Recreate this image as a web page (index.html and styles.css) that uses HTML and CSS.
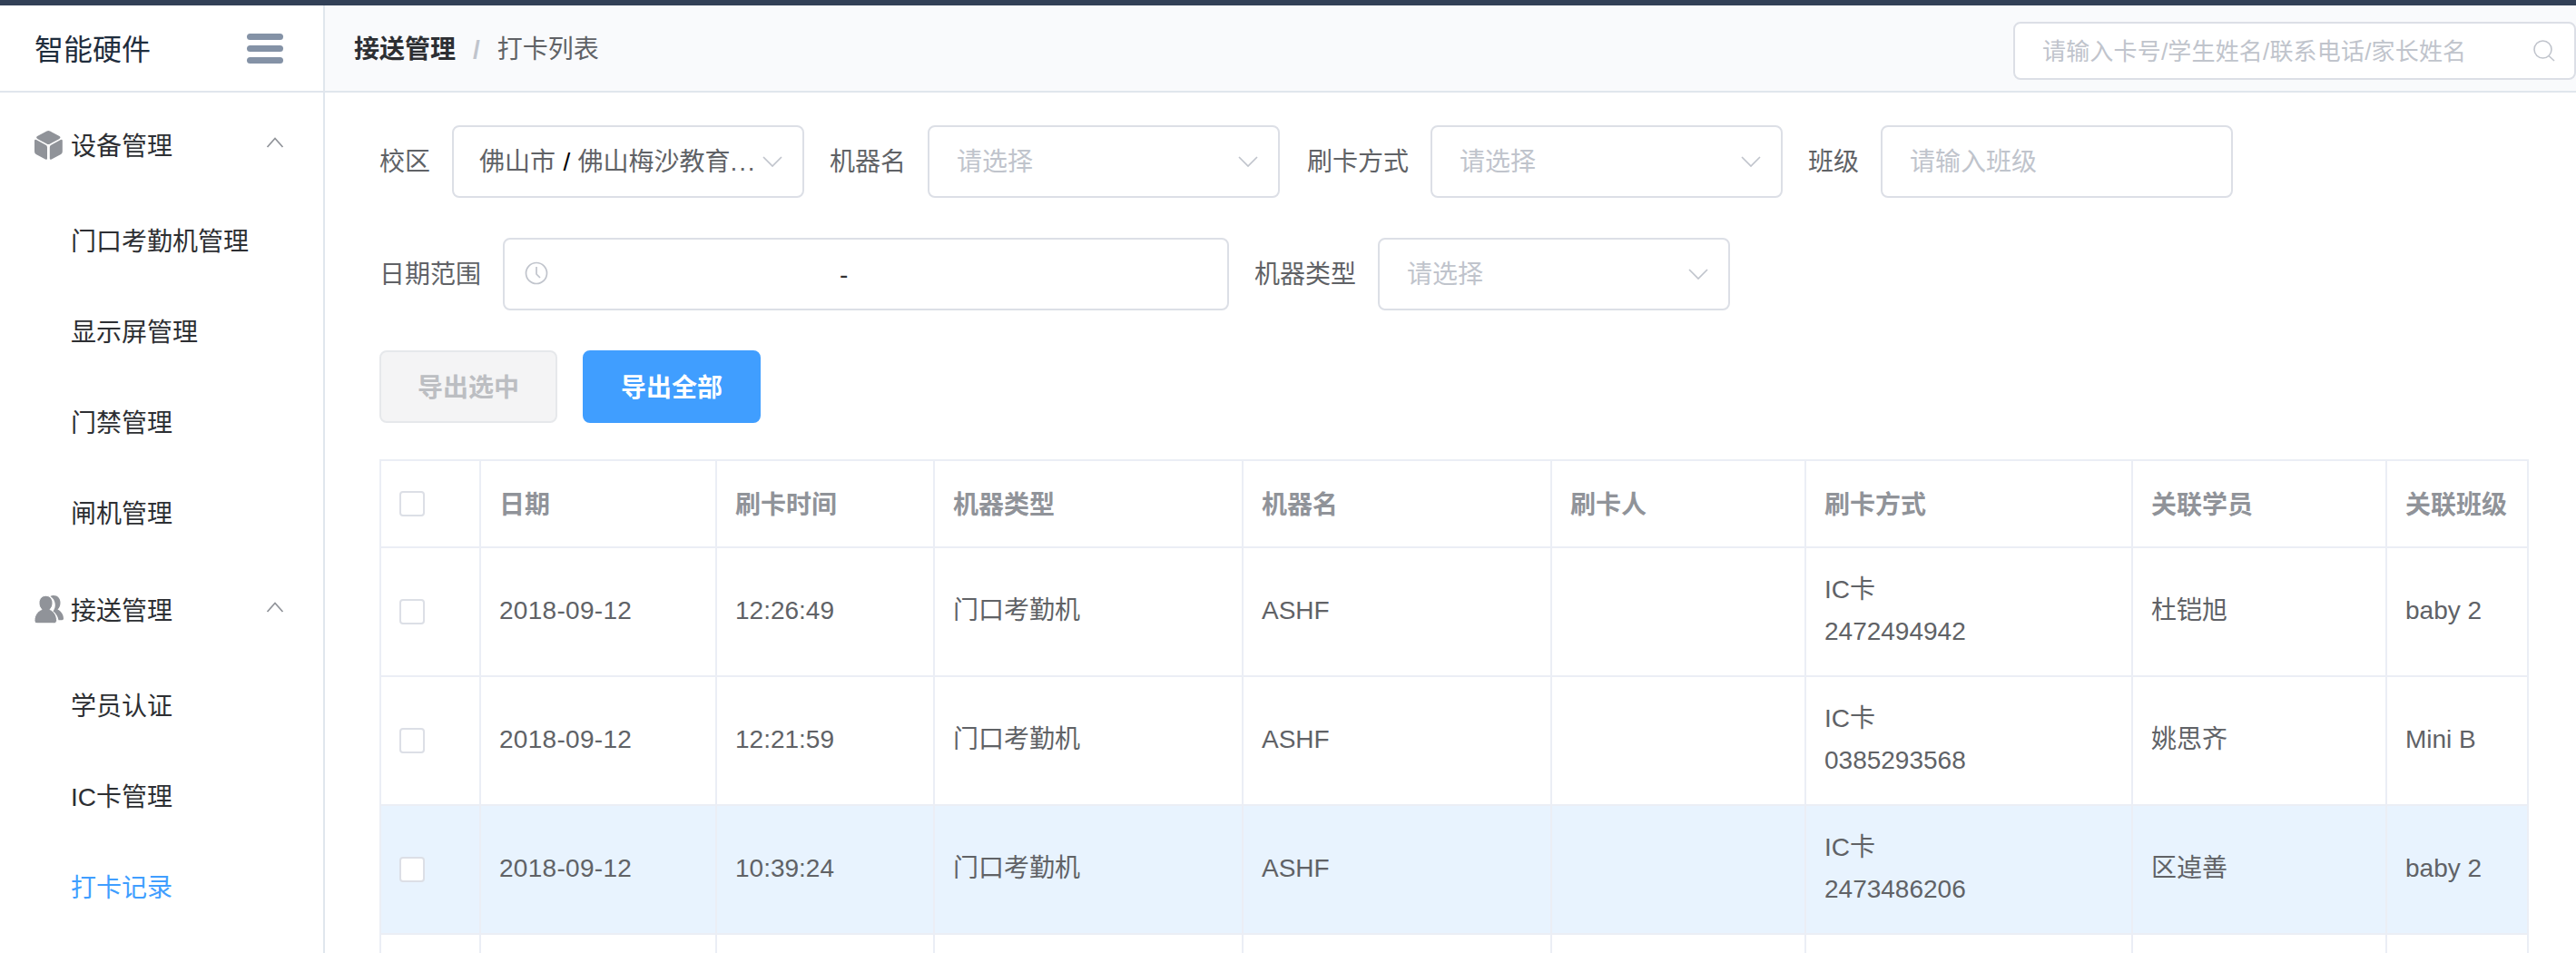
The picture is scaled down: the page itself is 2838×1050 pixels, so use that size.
FILE: index.html
```html
<!DOCTYPE html>
<html lang="zh-CN">
<head>
<meta charset="utf-8">
<title>打卡列表</title>
<link rel="stylesheet" href="styles.css">
</head>
<body>
<svg class="sprite" width="0" height="0">
  <symbol id="down" viewBox="0 0 22 12"><path d="M1 1l10 10L21 1" fill="none" stroke="currentColor" stroke-width="1.7"/></symbol>
  <symbol id="up" viewBox="0 0 20 12"><path d="M1.500 11L10 1.500l8.500 9.500" fill="none" stroke="currentColor" stroke-width="1.7"/></symbol>
</svg>
<div class="topbar"></div>
<div class="app">
  <aside class="sidebar">
    <div class="brand">
      <span class="text">智能硬件</span>
      <div class="burger"><i></i><i></i><i></i></div>
    </div>
    <nav class="menu">
      <div class="group">
        <svg class="group-icon" viewBox="0 0 33 34"><path d="M14.500 1.500q1.800-1 3.600 0L28 6.800q3 1.700 0 3.400l-9.900 5.300q-1.800 1-3.600 0L4.600 10.200q-3-1.700 0-3.400z M1 12.200q0-2 2-1.200l10.500 5.800q1.500.8 1.500 2.500V31.500q0 2-2 1L2.700 27Q1 26 1 24z M31.800 12.200q0-2-2-1.200l-10.500 5.800q-1.500.8-1.500 2.500V31.500q0 2 2 1L30.100 27q1.700-1 1.700-3z"/></svg>
        <span class="text">设备管理</span>
        <svg class="caret"><use href="#up"/></svg>
      </div>
      <a class="item">门口考勤机管理</a>
      <a class="item">显示屏管理</a>
      <a class="item">门禁管理</a>
      <a class="item">闸机管理</a>
      <div class="group">
        <svg class="group-icon people" viewBox="0 0 33 34"><path d="M18.500 2c1-.8 2.200-1 3.500-1 4.500 0 7.500 3.500 7.500 8 0 3-1 5.500-3 7.500 4 2 6.500 6 6.500 10 0 1-.7 1.700-1.700 1.700H27.500c-.8-4-2.800-7.500-6-9.700 3.700-5 3.200-12.500-3-16.500z"/><path d="M13.500 1.300c4.300 0 7.500 3.400 7.500 7.900 0 3-1 5.500-3 7.300 4.500 2 7.500 6.500 7.500 12 0 2-1 3.300-3 3.300H4c-2 0-3-1.300-3-3.300C1 23 4.300 18.500 9 16.500c-2-1.800-3-4.300-3-7.300 0-4.500 3.200-7.900 7.500-7.900z"/></svg>
        <span class="text">接送管理</span>
        <svg class="caret"><use href="#up"/></svg>
      </div>
      <a class="item">学员认证</a>
      <a class="item">IC卡管理</a>
      <a class="item active">打卡记录</a>
    </nav>
  </aside>
  <main class="main">
    <header class="header">
      <div class="crumbs"><b>接送管理</b><span class="sep">/</span><span>打卡列表</span></div>
      <div class="search">
        <span>请输入卡号/学生姓名/联系电话/家长姓名</span>
        <svg viewBox="0 0 24 24"><circle cx="10.500" cy="10.500" r="9.500"/><path d="M17 17.500l6 5.500"/></svg>
      </div>
    </header>
    <section class="content">
      <div class="filters">
        <div class="field"><label>校区</label><div class="box value"><span>佛山市<em>/</em>佛山梅沙教育<span class="dots">...</span></span><svg class="arrow"><use href="#down"/></svg></div></div>
        <div class="field"><label>机器名</label><div class="box"><span>请选择</span><svg class="arrow"><use href="#down"/></svg></div></div>
        <div class="field way"><label>刷卡方式</label><div class="box"><span>请选择</span><svg class="arrow"><use href="#down"/></svg></div></div>
        <div class="field"><label>班级</label><div class="box"><span>请输入班级</span></div></div>
      </div>
      <div class="filters">
        <div class="field"><label>日期范围</label><div class="box range"><svg class="clock" viewBox="0 0 26 26"><circle cx="13" cy="13" r="11.500"/><path d="M13 6v8l4 4"/></svg><span>-</span></div></div>
        <div class="field"><label>机器类型</label><div class="box"><span>请选择</span><svg class="arrow"><use href="#down"/></svg></div></div>
      </div>
      <div class="actions">
        <button class="btn disabled" disabled>导出选中</button>
        <button class="btn primary">导出全部</button>
      </div>
      <table class="table">
        <colgroup><col class="c-check"><col class="c-date"><col class="c-time"><col class="c-type"><col class="c-name"><col class="c-person"><col class="c-way"><col class="c-student"><col class="c-class"></colgroup>
        <thead>
          <tr><th class="sel"><i class="check"></i></th><th>日期</th><th>刷卡时间</th><th>机器类型</th><th>机器名</th><th>刷卡人</th><th>刷卡方式</th><th>关联学员</th><th>关联班级</th></tr>
        </thead>
        <tbody>
          <tr><td class="sel"><i class="check"></i></td><td class="date">2018-09-12</td><td>12:26:49</td><td>门口考勤机</td><td>ASHF</td><td></td><td>IC卡<br>2472494942</td><td>杜铠旭</td><td>baby 2</td></tr>
          <tr><td class="sel"><i class="check"></i></td><td class="date">2018-09-12</td><td>12:21:59</td><td>门口考勤机</td><td>ASHF</td><td></td><td>IC卡<br>0385293568</td><td>姚思齐</td><td>Mini B</td></tr>
          <tr class="hover"><td class="sel"><i class="check"></i></td><td class="date">2018-09-12</td><td>10:39:24</td><td>门口考勤机</td><td>ASHF</td><td></td><td>IC卡<br>2473486206</td><td>区逴善</td><td>baby 2</td></tr>
          <tr class="cut"><td></td><td></td><td></td><td></td><td></td><td></td><td></td><td></td><td></td></tr>
        </tbody>
      </table>
    </section>
  </main>
</div>
</body>
</html>
```
FILE: styles.css
```css
* { box-sizing: border-box; }
body {
  margin: 0;
  height: 1050px;
  overflow: hidden;
  background: #fff;
  color: #606266;
  font: 28px/46px "Liberation Sans", "Noto Sans CJK SC", sans-serif;
}
i, em { font-style: normal; }
.sprite { display: block; }
.topbar { height: 6px; background: #324057; }
.app { display: flex; height: 1044px; }

.sidebar { width: 358px; flex: none; border-right: 2px solid #e0e6ed; color: #2d2f33; }
.brand {
  display: flex;
  align-items: center;
  justify-content: space-between;
  height: 96px;
  padding: 0 44px 0 38px;
  border-bottom: 2px solid #e0e6ed;
  color: #1f2d3d;
  font-size: 32px;
}
.text { padding-top: 3px; }
.burger { display: flex; flex-direction: column; gap: 6px; width: 40px; }
.burger i { height: 7px; border-radius: 4px; background: #8492a6; }
.menu { padding-top: 2px; }
.group { display: flex; align-items: center; height: 112px; padding: 0 43px 0 37px; }
.group-icon { width: 33px; height: 34px; margin-right: 8px; fill: #909399; }
.people path + path { stroke: #fff; stroke-width: 1; }
.caret { width: 20px; height: 12px; margin: -6px 0 0 auto; color: #909399; }
.item { display: block; height: 100px; padding: 2px 0 0 78px; line-height: 98px; }
.item.active { color: #409eff; }

.main { flex: 1; min-width: 0; }
.header {
  display: flex;
  align-items: center;
  justify-content: space-between;
  height: 96px;
  padding-left: 32px;
  border-bottom: 2px solid #e0e6ed;
  background: #f9fafc;
}
.crumbs { padding-top: 3px; }
.crumbs b { color: #2d2f33; }
.crumbs .sep { margin: 0 19px; color: #c0c4cc; font-weight: bold; }
.search {
  display: flex;
  align-items: center;
  justify-content: space-between;
  width: 620px;
  height: 64px;
  margin-top: 6px;
  padding: 0 21px 0 30px;
  border: 2px solid #dcdfe6;
  border-radius: 8px;
  background: #fff;
  color: #c0c4cc;
  font-size: 26px;
}
.search span { padding-top: 2px; letter-spacing: .18px; }
.search svg { width: 24px; height: 24px; fill: none; stroke: #c0c4cc; stroke-width: 1.6; }

.content { padding: 36px 52px 0 60px; }
.filters { display: flex; gap: 28px; margin-bottom: 44px; }
.field { display: flex; align-items: center; gap: 24px; }
.way { margin-left: 2px; }
.field label, .box > span { padding-top: 2px; }
.box {
  display: flex;
  align-items: center;
  justify-content: space-between;
  width: 388px;
  height: 80px;
  padding: 0 22px 0 30px;
  border: 2px solid #dcdfe6;
  border-radius: 8px;
  color: #c0c4cc;
  white-space: nowrap;
}
.box.value { padding-left: 28px; color: #606266; }
.value em { padding: 0 8.400px; color: #000; }
.dots { letter-spacing: 1.800px; }
.arrow { width: 22px; height: 12px; color: #c0c4cc; }
.range { width: 800px; padding: 0 21px 0 22px; color: #303133; }
.range > span { flex: 1; padding-left: 321px; }
.clock { width: 26px; height: 26px; margin-top: -2px; fill: none; stroke: #c0c4cc; stroke-width: 1.7; }

.actions { display: flex; gap: 28px; margin-bottom: 40px; }
.btn {
  width: 196px;
  height: 80px;
  padding: 0 0 2px;
  border: 2px solid #409eff;
  border-radius: 8px;
  font: bold 28px "Liberation Sans", "Noto Sans CJK SC", sans-serif;
}
.primary { background: #409eff; color: #fff; }
.disabled { border-color: #e6e8eb; background: #f4f4f5; color: #bcbec2; }

.table {
  width: 2368px;
  table-layout: fixed;
  border-collapse: separate;
  border-spacing: 0;
  border-top: 2px solid #ebeef5;
  border-left: 2px solid #ebeef5;
}
.c-check { width: 110px; }
.c-date { width: 260px; }
.c-time { width: 240px; }
.c-type, .c-name { width: 340px; }
.c-person, .c-student { width: 280px; }
.c-way { width: 360px; }
.c-class { width: 156px; }
th, td { padding: 0 20px; border: solid #ebeef5; border-width: 0 2px 2px 0; text-align: left; }
th { height: 96px; padding-top: 3px; color: #909399; white-space: nowrap; }
td { height: 142px; padding-bottom: 2px; }
.sel { padding-top: 0; padding-bottom: 0; }
.date { letter-spacing: .3px; }
.hover td { background: #e8f3fe; }
.cut td { height: 20px; padding: 0; border-bottom: 0; }
.check { display: block; width: 28px; height: 28px; border: 2px solid #dcdfe6; border-radius: 4px; background: #fff; }
```
